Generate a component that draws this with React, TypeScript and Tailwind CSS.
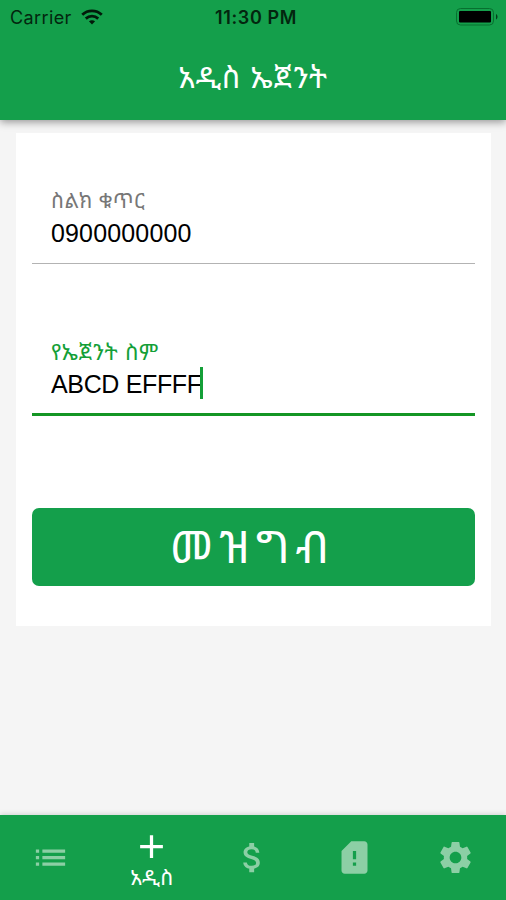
import React, { useState } from 'react';
import type { IconType } from 'react-icons';
import { MdAdd, MdAttachMoney, MdList, MdSettings, MdSimCardAlert } from 'react-icons/md';

interface Tab {
  key: string;
  label: string;
  icon: IconType;
}

const tabs: Tab[] = [
  { key: 'list', label: '', icon: MdList },
  { key: 'new', label: 'አዲስ', icon: MdAdd },
  { key: 'money', label: '', icon: MdAttachMoney },
  { key: 'alert', label: '', icon: MdSimCardAlert },
  { key: 'settings', label: '', icon: MdSettings },
];

const StatusBar: React.FC = () => (
  <div className="grid grid-cols-3 items-center h-[34px] pl-[10px] pr-2 text-[#03260f]">
    <div className="flex items-center gap-[9px]">
      <span className="text-[18px] tracking-[0.4px]">Carrier</span>
      <svg width="22" height="16" viewBox="0 0 23 16" fill="none" stroke="#021a0a" strokeWidth="2.9">
        <path d="M1.3 5.7C7 .3 16 .3 21.7 5.7" />
        <path d="M5 9.7c3.700-3.400 9.300-3.400 13 0" />
        <path d="M11.5 15.800l-3.200-3.300c1.800-1.600 4.600-1.600 6.400 0z" fill="#021a0a" stroke="none" />
      </svg>
    </div>
    <span className="text-center text-[18px] font-semibold tracking-[0.6px] whitespace-nowrap pl-1">11:30 PM</span>
    <svg className="justify-self-end" width="42" height="18" viewBox="0 0 42 18">
      <rect x="0.5" y="0.5" width="37" height="16.5" rx="4" fill="none" stroke="#07702f" />
      <rect x="3" y="3" width="32" height="11.5" rx="1" fill="#000" />
      <path d="M40 6c2 1 2 4.500 0 5.500z" fill="#053d1a" />
    </svg>
  </div>
);

const App: React.FC = () => {
  const [phone, setPhone] = useState('0900000000');
  const [name, setName] = useState('ABCD EFFFF');
  const [activeTab, setActiveTab] = useState('new');

  return (
    <div className="flex flex-col w-full h-screen overflow-hidden bg-[#f5f5f5] font-['Inter','Noto_Sans_Ethiopic','Noto_Sans',sans-serif]">
      <header className="relative h-[120px] shrink-0 bg-[#149f4b] shadow-[0_2px_8px_rgba(0,0,0,0.4)]">
        <StatusBar />
        <h1 className="pt-[23px] text-center text-[30px] leading-[40px] font-normal tracking-[0.7px] text-white">አዲስ ኤጀንት</h1>
      </header>

      <main className="flex-1">
        <form className="ml-4 mr-[15px] mt-[13px] h-[493px] bg-white px-4 pt-[53px]" onSubmit={(e) => e.preventDefault()}>
          <label className="block h-[78px] border-b border-[#b3b3b3] pl-[19px]">
            <span className="block h-7 pt-px text-[21px] leading-7 tracking-[0.3px] text-[#777777]">ስልክ ቁጥር</span>
            <input
              value={phone}
              onChange={(e) => setPhone(e.target.value)}
              className="block w-full h-9 pt-[3px] text-[25px] tracking-[0.15px] font-['Liberation_Sans',sans-serif] text-black outline-none"
            />
          </label>

          <label className="block h-[80px] mt-[72px] border-b-[3px] border-[#149624] pl-[19px]">
            <span className="block h-7 pt-[2px] text-[22px] leading-7 tracking-[0.5px] text-[#149f38]">የኤጀንት ስም</span>
            <span className="flex items-center h-9 pt-[2px]">
              <input
                value={name}
                onChange={(e) => setName(e.target.value)}
                className="w-[149px] h-9 pt-[3px] text-[25px] tracking-[-0.35px] font-['Liberation_Sans',sans-serif] text-black caret-transparent outline-none"
              />
              <span className="w-[3px] h-8 shrink-0 bg-[#149f38]" />
            </span>
          </label>

          <button
            type="submit"
            className="block w-full h-[78px] mt-[92px] rounded-[7px] bg-[#149f4b] text-[45px] leading-[76px] tracking-[6px] text-white"
          >
            <span className="block -translate-x-px">መዝግብ</span>
          </button>
        </form>
      </main>

      <nav className="grid grid-cols-5 h-[85px] shrink-0 bg-[#149f4b] shadow-[0_-1px_5px_rgba(0,0,0,0.15)]">
        {tabs.map(({ key, label, icon: Icon }) => (
          <button
            key={key}
            onClick={() => setActiveTab(key)}
            className={`flex flex-col items-center ${key === activeTab ? 'pt-[12px] text-white' : 'pt-[23px] text-[#8ccfa5]'}`}
          >
            <Icon size={39} />
            {key === activeTab && <span className="text-[21px] leading-6 tracking-[0.2px]">{label}</span>}
          </button>
        ))}
      </nav>
    </div>
  );
};

export default App;
